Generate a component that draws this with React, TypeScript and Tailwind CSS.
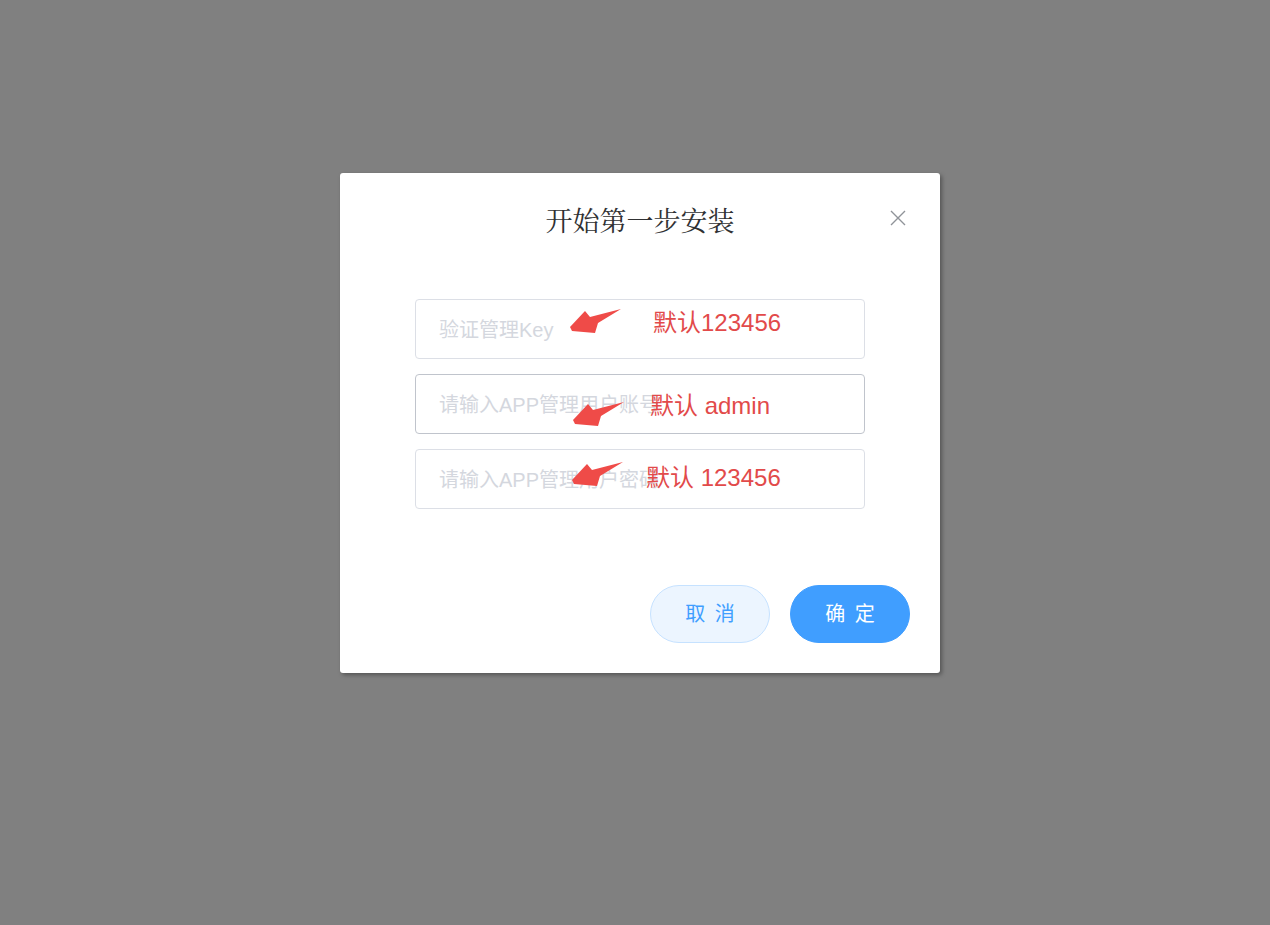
import React from "react";

function Arrow({ className }: { className: string }) {
  return (
    <svg className={className} viewBox="0 0 60 30" fill="#ef4b48">
      <polygon points="5,22 20,6 25,12 56,4 33,18 30,28 7,26" />
    </svg>
  );
}

export default function App() {
  return (
    <div className="w-full h-[925px] bg-[#808080] flex justify-center pt-[173px] pl-[10px]" style={{ fontFamily: '"Liberation Sans", "Noto Sans CJK SC", sans-serif' }}>
      <div className="w-[600px] h-[500px] bg-white rounded-[3px] shadow-[2px_2px_4px_rgba(0,0,0,0.35)] flex flex-col">
        <div className="relative h-[94px] flex items-center justify-center">
          <h1 className="text-[27px] leading-8 text-[#303133] font-normal" style={{ fontFamily: '"Noto Serif CJK SC", "Noto Sans CJK SC", serif' }}>
            开始第一步安装
          </h1>
          <button className="absolute right-[33px] top-[36px] w-[18px] h-[18px] flex items-center justify-center text-[#909399]">
            <svg viewBox="0 0 16 16" className="w-4 h-4" stroke="currentColor" strokeWidth="1.4" fill="none">
              <path d="M1 1 L15 15 M15 1 L1 15" />
            </svg>
          </button>
        </div>
        <div className="pt-[32px] flex justify-center">
          <div className="relative w-[450px] flex flex-col gap-[15px]">
            <input className="h-[60px] w-full border border-[#dcdfe6] rounded-[4px] px-[23px] pt-[2px] text-[20px] outline-none placeholder:text-[#d4d7de]" placeholder="验证管理Key" />
            <input className="h-[60px] w-full border border-[#c0c4cc] rounded-[4px] px-[23px] pt-[2px] text-[20px] outline-none placeholder:text-[#d4d7de]" placeholder="请输入APP管理用户账号" />
            <input className="h-[60px] w-full border border-[#dcdfe6] rounded-[4px] px-[23px] pt-[2px] text-[20px] outline-none placeholder:text-[#d4d7de]" placeholder="请输入APP管理用户密码" />

            <Arrow className="absolute left-[150px] top-[6px] w-[60px] h-[30px]" />
            <Arrow className="absolute left-[153px] top-[99px] w-[60px] h-[30px]" />
            <Arrow className="absolute left-[152px] top-[159px] w-[60px] h-[30px]" />

            <div className="absolute left-[238px] top-[12px] text-[24px] leading-[24px] text-[#e24a4a] whitespace-nowrap">默认123456</div>
            <div className="absolute left-[235px] top-[95px] text-[24px] leading-[24px] text-[#e24a4a] whitespace-nowrap">默认 admin</div>
            <div className="absolute left-[231px] top-[167px] text-[24px] leading-[24px] text-[#e24a4a] whitespace-nowrap">默认 123456</div>
          </div>
        </div>
        <div className="mt-auto flex justify-end gap-[20px] pr-[30px] pb-[30px]">
          <button className="w-[120px] h-[58px] rounded-full bg-[#ecf5ff] border border-[#c6e2ff] text-[#409eff] text-[20px] tracking-[2px] pl-[2px]">
            取 消
          </button>
          <button className="w-[120px] h-[58px] rounded-full bg-[#409eff] border border-[#409eff] text-white text-[20px] tracking-[2px] pl-[2px]">
            确 定
          </button>
        </div>
      </div>
    </div>
  );
}
